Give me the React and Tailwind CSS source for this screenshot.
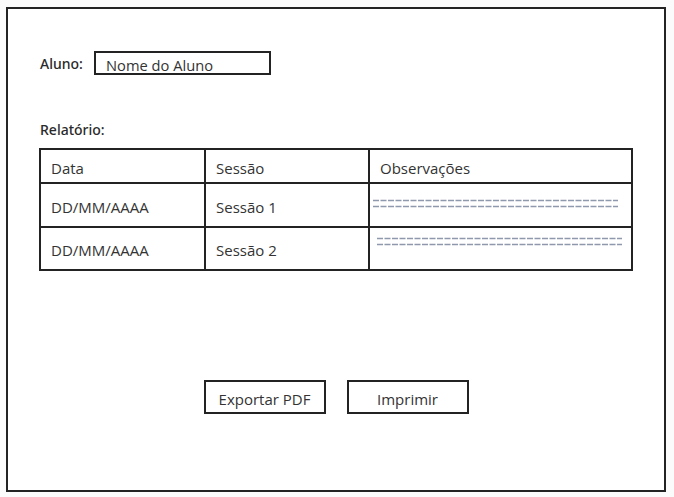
import React from 'react';

const font = { fontFamily: '"Open Sans", "Noto Sans", sans-serif' };
const labelFont = { fontFamily: '"Noto Sans", "Open Sans", sans-serif' };

function Dashes() {
  return (
    <svg width="245" height="9" className="block">
      <line x1="0" y1="1.5" x2="245" y2="1.5" stroke="#8e99ad" strokeWidth="1.5" strokeDasharray="6 1.5" />
      <line x1="0" y1="7.5" x2="245" y2="7.5" stroke="#8e99ad" strokeWidth="1.5" strokeDasharray="6 1.5" />
    </svg>
  );
}

const rows = [
  { data: 'DD/MM/AAAA', sessao: 'Sessão 1', pad: 'pl-[3px] pt-[15px]', h: 'h-[44px]' },
  { data: 'DD/MM/AAAA', sessao: 'Sessão 2', pad: 'pl-[7px] pt-[9px]', h: 'h-[43px]' },
];

export default function App() {
  return (
    <div className="min-h-screen bg-[#fbfbfc] pt-[7px] pl-[6px]" style={font}>
      <div className="w-[660px] h-[485px] border-2 border-[#232323] bg-white px-[32px] pt-[42px] flex flex-col text-[15px] text-[#333]">
        {/* aluno */}
        <div className="flex items-center h-[24px]">
          <span className="font-medium text-[14px] text-[#2a2a2a] w-[54px]" style={labelFont}>Aluno:</span>
          <div className="w-[177px] h-[24px] border-2 border-[#232323] pl-[10px] flex items-center text-[14.7px] leading-none pt-[4px]">
            Nome do Aluno
          </div>
        </div>

        <div className="mt-[45px] font-medium text-[14px] text-[#2a2a2a] leading-[20px]" style={labelFont}>Relatório:</div>

        <table className="mt-[8px] -ml-[1px] w-[592px] table-fixed border-collapse border-2 border-[#232323]">
          <colgroup>
            <col className="w-[165px]" />
            <col className="w-[164px]" />
            <col className="w-[263px]" />
          </colgroup>
          <thead>
            <tr className="h-[34px]">
              <th className="border-2 border-[#232323] text-left font-normal pl-[10px] pt-[4px]">Data</th>
              <th className="border-2 border-[#232323] text-left font-normal pl-[10px] pt-[4px]">Sessão</th>
              <th className="border-2 border-[#232323] text-left font-normal pl-[10px] pt-[4px]">Observações</th>
            </tr>
          </thead>
          <tbody>
            {rows.map((r, i) => (
              <tr key={i} className={r.h}>
                <td className="border-2 border-[#232323] pl-[10px] pt-[4px]">{r.data}</td>
                <td className="border-2 border-[#232323] pl-[10px] pt-[4px]">{r.sessao}</td>
                <td className={`border-2 border-[#232323] align-top ${r.pad}`}>
                  <Dashes />
                </td>
              </tr>
            ))}
          </tbody>
        </table>

        <div className="mt-[109px] flex justify-center gap-[21px]">
          <button className="w-[122px] h-[34px] border-2 border-[#232323] bg-white text-[15px] pt-[5px] text-[#333]">
            Exportar PDF
          </button>
          <button className="w-[122px] h-[34px] border-2 border-[#232323] bg-white text-[15px] pt-[5px] text-[#333]">
            Imprimir
          </button>
        </div>
      </div>
    </div>
  );
}
